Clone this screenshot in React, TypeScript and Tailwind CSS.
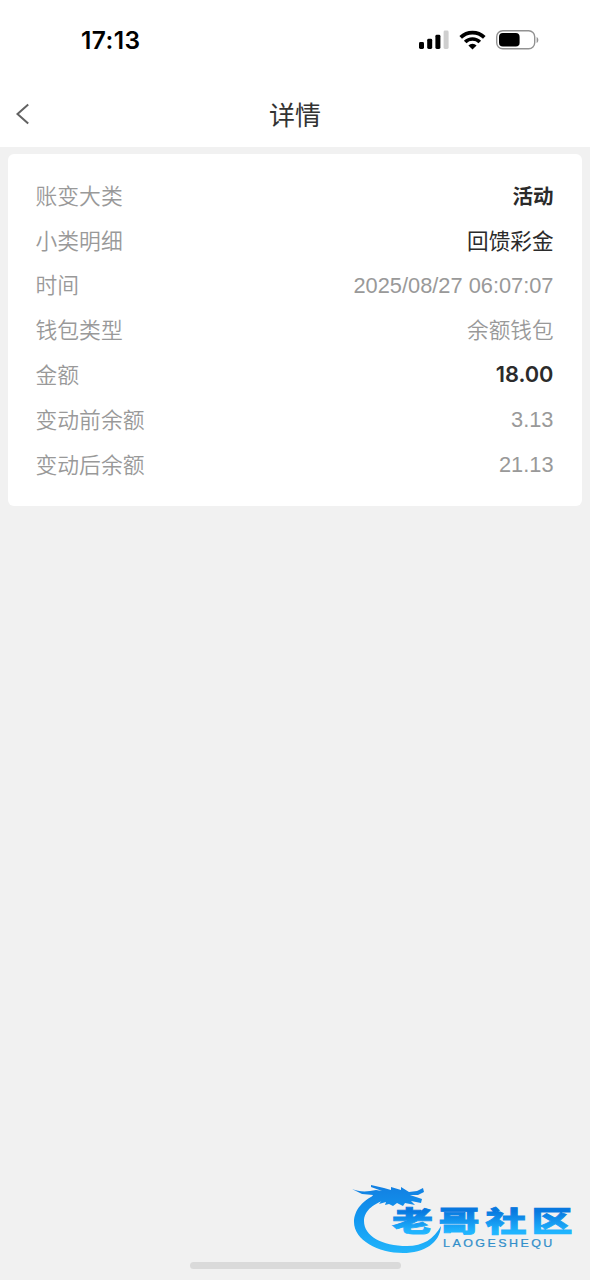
type Row = { label: string; value: string; tone: string };

const muted = "text-[21.8px] text-[#999]";

const rows: Row[] = [
  { label: "账变大类", value: "活动", tone: "pt-[2px] text-[20.5px] font-bold text-[#2b2b2b]" },
  { label: "小类明细", value: "回馈彩金", tone: "pt-px text-[21.6px] text-[#2b2b2b]" },
  { label: "时间", value: "2025/08/27 06:07:07", tone: muted },
  { label: "钱包类型", value: "余额钱包", tone: "pt-px text-[21.6px] font-[350] text-[#999]" },
  {
    label: "金额",
    value: "18.00",
    tone: "font-['Inter',sans-serif] text-[21.8px] font-semibold text-[#2b2b2b]",
  },
  { label: "变动前余额", value: "3.13", tone: muted },
  { label: "变动后余额", value: "21.13", tone: muted },
];

function StatusBar() {
  return (
    <div className="flex h-20 items-center justify-between pl-[81px] pr-[51px]">
      <span className="font-['Inter',sans-serif] text-[24.5px] leading-none font-semibold tracking-[0.45px] text-black">
        17:13
      </span>
      <div className="flex items-center">
        <svg width="30" height="20" viewBox="0 0 30 20" className="mr-[10px]">
          <rect x="0" y="12" width="5" height="7" rx="1.4" />
          <rect x="8.2" y="8.8" width="5" height="10.2" rx="1.4" />
          <rect x="16.4" y="4.8" width="5" height="14.2" rx="1.4" />
          <rect x="24.6" y="0.6" width="5" height="18.4" rx="1.4" fill="#cfcfcf" />
        </svg>
        <svg width="27" height="20" viewBox="0 0 27 20" className="mr-[10px]">
          <g fill="none" stroke="#000" strokeWidth="3.7">
            <path d="M1.7 7.4A16.8 16.8 0 0 1 25.3 7.4" />
            <path d="M6.2 12A10.4 10.4 0 0 1 20.8 12" />
          </g>
          <path d="M13.5 19.6 9.4 15.5a5.9 5.9 0 0 1 8.2 0Z" />
        </svg>
        <svg width="43" height="20" viewBox="0 0 43 20">
          <rect x="0.7" y="0.8" width="38" height="18" rx="6" fill="#fff" stroke="#929292" strokeWidth="1.4" />
          <rect x="3" y="3.1" width="20.6" height="13.4" rx="3.8" />
          <path d="M40.6 7v6c2.3-.8 2.3-5.2 0-6Z" fill="#929292" />
        </svg>
      </div>
    </div>
  );
}

function Watermark() {
  return (
    <svg
      width="230"
      height="80"
      viewBox="350 1180 230 80"
      className="absolute top-[1180px] left-[350px]"
      fontFamily="'Noto Sans CJK SC', sans-serif"
    >
      <defs>
        <linearGradient id="ring" gradientUnits="userSpaceOnUse" x1="0" y1="1186" x2="0" y2="1253">
          <stop offset="0" stopColor="#1280e2" />
          <stop offset="0.5" stopColor="#1298f1" />
          <stop offset="1" stopColor="#22b5fb" />
        </linearGradient>
        <linearGradient id="name" x1="0" y1="0.3" x2="0" y2="0.8">
          <stop offset="0" stopColor="#0878df" />
          <stop offset="1" stopColor="#20b5ff" />
        </linearGradient>
      </defs>
      <g fill="url(#ring)">
        <path d="M380 1193C362 1199 354 1211 354 1222C354 1240 378 1253 403 1253C424 1253 440 1243 441 1226C434 1239 423 1246 407 1246C382 1246 364 1236 364 1221C364 1211 374 1202 390 1199Z" />
        <path d="M352 1189C359 1192 367 1192 376 1190L382 1191L371 1187L371 1185L384 1188L391 1190L391 1187L401 1190L401 1187L409 1192L417 1191L423 1188L424 1192L418 1195L410 1195L422 1199L421 1203L411 1201L415 1205L405 1203L403 1206L397 1203L393 1206L389 1204L385 1205L386 1202L379 1204L382 1200L371 1202L366 1206L373 1195L362 1194Z" />
      </g>
      <g fill="url(#name)" stroke="url(#name)" strokeWidth="0.8" fontSize="28.5" fontWeight="900">
        <text transform="translate(392 1232) scale(1.44 1)">老</text>
        <text transform="translate(438.5 1232) scale(1.44 1)">哥</text>
        <text transform="translate(485.5 1232) scale(1.44 1)">社</text>
        <text transform="translate(531.5 1232) scale(1.44 1)">区</text>
      </g>
      <text
        transform="translate(443 1246.5) scale(1.25 1)"
        letterSpacing="1.95"
        fontFamily="'Liberation Sans', sans-serif"
        fontSize="10"
        fill="#318fca"
        stroke="#318fca"
        strokeWidth="0.2"
      >
        LAOGESHEQU
      </text>
    </svg>
  );
}

export default function App() {
  return (
    <div className="relative flex h-[1280px] w-[590px] flex-col overflow-hidden bg-[#f1f1f1] font-['Liberation_Sans','Noto_Sans_CJK_SC',sans-serif]">
      <header className="h-[147px] bg-white">
        <StatusBar />
        <div className="grid h-[67px] grid-cols-[60px_1fr_60px] items-center">
          <svg width="16" height="22" viewBox="0 0 16 22" className="ml-[15px]">
            <path d="M13.2 1.5 2.5 11l10.7 9.5" fill="none" stroke="#626262" strokeWidth="2" />
          </svg>
          <h1 className="pt-[4px] text-center text-[26px] leading-none text-[#333]">详情</h1>
        </div>
      </header>
      <main className="mx-2 mt-[7px] h-[351.5px] rounded-md bg-white pt-[19.8px] pr-[28.5px] pl-[27.5px]">
        {rows.map((row) => (
          <div key={row.label} className="flex h-[44.8px] items-center justify-between leading-none">
            <span className="pt-px text-[21.8px] font-[350] text-[#999]">{row.label}</span>
            <span className={row.tone}>{row.value}</span>
          </div>
        ))}
      </main>
      <Watermark />
      <div className="mx-auto mt-auto mb-[11px] h-[7px] w-[211px] rounded-full bg-[#dadada]" />
    </div>
  );
}
